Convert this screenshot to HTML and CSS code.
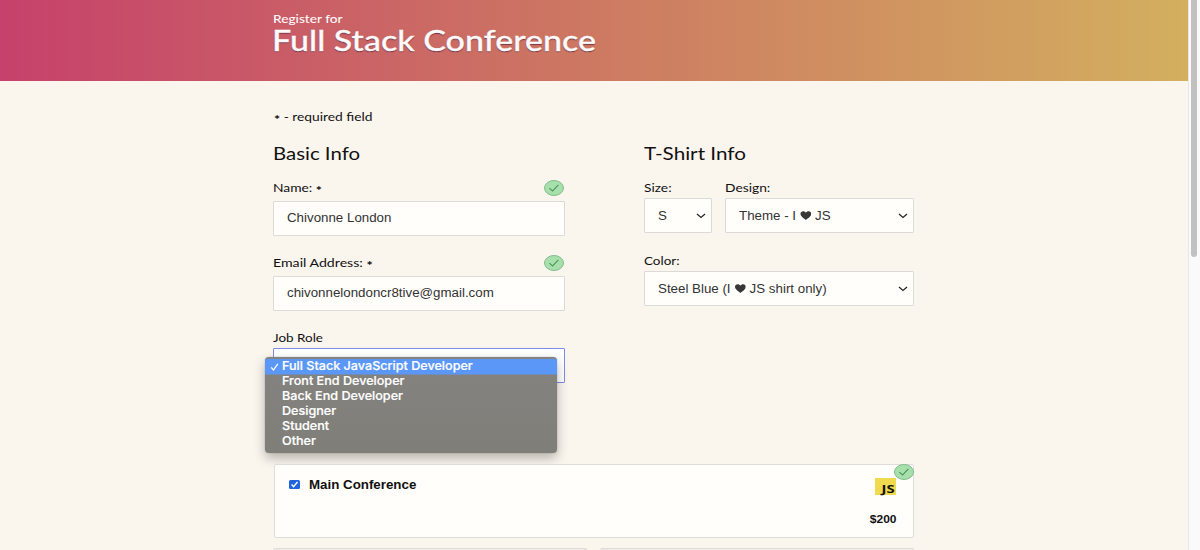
FILE: index.html
```html
<!DOCTYPE html>
<html lang="en">
<head>
<meta charset="utf-8">
<title>Register for Full Stack Conference</title>
<link rel="stylesheet" href="styles.css">
</head>
<body>
<svg width="0" height="0" class="defs">
  <symbol id="ok" viewBox="0 0 20 16"><ellipse cx="10" cy="8" rx="9.5" ry="7.5" fill="#a8e0ab" stroke="#83bd8a"/><path d="M5.3 8.1 8.6 11 14.4 4.9" fill="none" stroke="#4d9560" stroke-width="1.1"/></symbol>
  <symbol id="chev" viewBox="0 0 10 6"><path d="M1 1 5 4.5 9 1" fill="none" stroke="#222" stroke-width="1.2"/></symbol>
  <symbol id="heart" viewBox="0 0 12 11"><path d="M6 10.5C4.6 9 .4 6.6 .4 3.4 .4 1.6 1.7 .5 3.2 .5 4.5 .5 5.5 1.2 6 2.2 6.5 1.2 7.5 .5 8.8 .5 10.3 .5 11.6 1.6 11.6 3.4 11.6 6.6 7.4 9 6 10.5Z" fill="#373735"/></symbol>
</svg>
<div class="page">
  <header class="header">
    <p class="pre"><span class="t">Register for</span></p>
    <h1><span class="t">Full Stack Conference</span></h1>
  </header>
  <main class="main">
    <p class="required label"><span class="t"><i class="star">*</i> - required field</span></p>
    <div class="columns">
      <section class="basic">
        <h2><span class="t">Basic Info</span></h2>
        <div class="field">
          <div class="label"><span class="t">Name: <i class="star">*</i></span><svg class="ok"><use href="#ok"/></svg></div>
          <div class="box"><span class="t">Chivonne London</span></div>
        </div>
        <div class="field">
          <div class="label"><span class="t wide">Email Address: <i class="star">*</i></span><svg class="ok"><use href="#ok"/></svg></div>
          <div class="box"><span class="t">chivonnelondoncr8tive@gmail.com</span></div>
        </div>
        <div class="field role">
          <div class="label"><span class="t narrow">Job Role</span></div>
          <div class="box focused"></div>
          <ul class="menu">
            <li class="selected"><svg class="tick" viewBox="0 0 8 8"><path d="M.7 4.4 3 7 7.3 .8" fill="none" stroke="#fff" stroke-width="1.3"/></svg><span class="t">Full Stack JavaScript Developer</span></li>
            <li><span class="t">Front End Developer</span></li>
            <li><span class="t">Back End Developer</span></li>
            <li><span class="t">Designer</span></li>
            <li><span class="t">Student</span></li>
            <li><span class="t">Other</span></li>
          </ul>
        </div>
      </section>
      <section class="shirt">
        <h2><span class="t">T-Shirt Info</span></h2>
        <div class="pair">
          <div class="size">
            <div class="label"><span class="t">Size:</span></div>
            <div class="box"><span class="t">S</span><svg class="chev"><use href="#chev"/></svg></div>
          </div>
          <div class="design">
            <div class="label"><span class="t">Design:</span></div>
            <div class="box"><span class="t">Theme - I <svg class="heart"><use href="#heart"/></svg> JS</span><svg class="chev"><use href="#chev"/></svg></div>
          </div>
        </div>
        <div class="color">
          <div class="label"><span class="t narrow">Color:</span></div>
          <div class="box"><span class="t">Steel Blue (I <svg class="heart"><use href="#heart"/></svg> JS shirt only)</span><svg class="chev"><use href="#chev"/></svg></div>
        </div>
      </section>
    </div>
    <div class="card">
      <div class="check"><svg viewBox="0 0 11 9"><path d="M2.6 4.5 4.6 6.7 8.5 2" fill="none" stroke="#fff" stroke-width="1.5"/></svg></div>
      <b class="event"><span class="t">Main Conference</span></b>
      <div class="side">
        <div class="js"><span class="t">JS</span></div>
        <div class="price"><span class="t">$200</span></div>
      </div>
      <svg class="ok corner"><use href="#ok"/></svg>
    </div>
    <div class="next"><div class="stub"></div><div class="stub"></div></div>
  </main>
</div>
<div class="scroll"><div class="thumb"></div></div>
</body>
</html>
```

FILE: styles.css
```css
* { box-sizing: border-box; margin: 0; padding: 0; }
body { display: flex; width: 1200px; height: 550px; overflow: hidden; background: #faf5ed; font-family: Lato, sans-serif; color: #111; }
.defs { position: absolute; }
.t { display: inline-block; white-space: nowrap; transform: scaleX(1.2); transform-origin: left; }
.page { width: 1188px; height: 550px; overflow: hidden; }
.header { height: 81px; padding: 13px 0 0 273px; background: linear-gradient(to right, #c6416b, #cd7962 50%, #d3af5f); color: #fffafa; }
.pre { font-size: 12px; line-height: 12px; font-weight: 500; }
.pre .t { transform: scaleX(1.14); }
h1 { margin-left: -1px; font-size: 28px; line-height: 31px; font-weight: 500; text-shadow: 0 1px 1px rgba(70, 30, 60, .75); }
h1 .t { transform: scaleX(1.215); -webkit-text-stroke: .3px #fffafa; }
.main { width: 641px; margin-left: 273px; padding-top: 28px; }
.label { position: relative; height: 16px; font-size: 11.5px; line-height: 16px; }
.label .wide { transform: scaleX(1.23); }
.label .narrow { transform: scaleX(1.17); }
.star { display: inline-block; font-style: normal; font-weight: 900; font-size: 12px; line-height: 10px; transform: translateY(2.5px); }
.required { padding-left: 1px; margin-bottom: 18px; }
.columns { display: flex; justify-content: space-between; height: 321px; }
.basic { width: 292px; }
.shirt { width: 270px; }
h2 { height: 22px; margin-bottom: 15px; font-size: 17px; line-height: 22px; font-weight: 400; }
.shirt h2 .t { transform: scaleX(1.215); }
.field { position: relative; margin-bottom: 19px; }
.field .label { margin-bottom: 5px; }
.box { display: flex; align-items: center; justify-content: space-between; height: 35px; padding: 0 5px 0 12.5px; background: #fffefb; border: 1px solid #dcdad7; border-radius: 1px; font: 12px "Liberation Sans", sans-serif; color: #333; }
.basic .box { padding-bottom: 1px; }
.box .t { transform: scaleX(1.11); }
.ok { position: absolute; right: 1px; top: -.5px; width: 20px; height: 16px; }
.field .role .label, .role .label { margin-bottom: 2px; }
.box.focused { border-color: #7d8ce8; background: #fff; }
.menu { position: absolute; left: -8.5px; top: 27px; width: 292.5px; height: 96px; padding-top: 2px; list-style: none; border-radius: 4px; background: linear-gradient(#85837f, #807e79); box-shadow: 0 0 1px rgba(0, 0, 0, .5), 0 5px 12px rgba(0, 0, 0, .28); font: 500 12px/13px Inter, sans-serif; color: #fff; }
.menu li { position: relative; height: 15px; padding-left: 17.5px; line-height: 13px; }
.menu .selected { background: #5a97f7; box-shadow: 0 .5px #5a97f7; }
.menu .t { transform: scaleX(1.05); -webkit-text-stroke: .2px #fff; }
.tick { position: absolute; left: 5px; top: 3.5px; width: 9px; height: 8px; }
.pair { display: flex; gap: 13px; margin-bottom: 20px; }
.size { width: 68px; }
.design { flex: 1; }
.shirt .label { margin-bottom: 2px; }
.chev { width: 10px; height: 6px; }
.heart { width: 10.5px; height: 11px; margin: 0; vertical-align: -1.5px; }
.card { position: relative; display: flex; height: 74px; margin-left: 1px; padding: 13px 17px 0 14px; background: #fffefb; border: 1px solid #dfddda; border-radius: 2px; font-family: "Liberation Sans", sans-serif; }
.check { width: 11px; height: 9px; margin-top: 2px; border-radius: 1.5px; background: #1f63df; }
.check svg { display: block; width: 11px; height: 9px; }
.event { margin-left: 9px; font-size: 12px; line-height: 14px; }
.event .t { transform: scaleX(1.11); }
.side { flex: 1; display: flex; flex-direction: column; align-items: flex-end; }
.side .t { transform-origin: right; }
.js { width: 21px; height: 17px; padding: 4px 1px 0 0; background: #f0db4f; font: 700 11px/14px "Open Sans", sans-serif; text-align: right; }
.js .t { transform: scaleX(1.35); }
.price { margin-top: 18px; font-weight: 700; font-size: 11px; line-height: 13px; }
.price .t { transform: scaleX(1.09); }
.corner { right: -1px; top: -1px; }
.next { display: flex; gap: 13px; margin-top: 10px; }
.stub { flex: 1; height: 20px; background: #eeece8; border: 1px solid #dedcd9; border-radius: 2px; }
.scroll { width: 12px; height: 550px; padding-left: 2px; border-left: 1px solid #e8e6e8; background: #fafafa; }
.thumb { width: 6px; height: 257px; border-radius: 0 0 3px 3px; background: #c1c1c1; }
```
